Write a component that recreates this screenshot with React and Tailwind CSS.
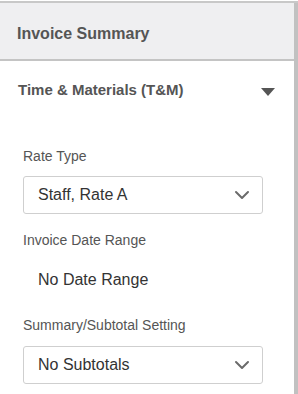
function Chevron() {
	return (
		<svg width="16" height="10" viewBox="0 0 16 10" fill="none" className="shrink-0">
			<path d="M2 2l6 6 6-6" stroke="#6b6b6b" strokeWidth="2" strokeLinecap="round" strokeLinejoin="round" />
		</svg>
	)
}

function SelectBox({ value }) {
	return (
		<div className="w-[240px] h-[38px] border border-[#cfcfcf] rounded-[3px] flex items-center justify-between pl-[14px] pr-[12px] text-[16px] text-[#333]">
			<span>{value}</span>
			<Chevron />
		</div>
	)
}

function Label({ children }) {
	return <div className="text-[14px] text-[#555] leading-[16px]">{children}</div>
}

export default function App() {
	return (
		<div className="w-[298px] h-[394px] bg-white pt-[1px] overflow-hidden" style={{ fontFamily: '"Liberation Sans", Arial, sans-serif' }}>
			<div className="h-full border-t-2 border-[#c8c8c8] flex">
				<div className="flex-1 flex flex-col">
					<div className="h-[58px] bg-[#efeff1] border-b-2 border-[#c4c4c4] flex items-center pl-[17px] pt-[5px]">
						<h1 className="text-[16px] font-bold text-[#555]">Invoice Summary</h1>
					</div>
					<div className="flex items-center justify-between pl-[18px] pr-[19px] h-[58px] pt-[1px]">
						<h2 className="text-[15px] font-bold text-[#555]">Time & Materials (T&M)</h2>
						<svg width="14" height="8" viewBox="0 0 14 8" className="mt-[3px]">
							<path d="M0 0h14L7 8z" fill="#555" />
						</svg>
					</div>
					<div className="pl-[23px] flex flex-col">
						<div className="mt-[29px]"><Label>Rate Type</Label></div>
						<div className="mt-[12px]"><SelectBox value="Staff, Rate A" /></div>
						<div className="mt-[18px]"><Label>Invoice Date Range</Label></div>
						<div className="mt-[22px] pl-[15px] text-[16px] text-[#333] leading-[20px]">No Date Range</div>
						<div className="mt-[27px]"><Label>Summary/Subtotal Setting</Label></div>
						<div className="mt-[13px]"><SelectBox value="No Subtotals" /></div>
					</div>
				</div>
				<div className="w-[4px] bg-[#c1c1c1]"></div>
			</div>
		</div>
	)
}
